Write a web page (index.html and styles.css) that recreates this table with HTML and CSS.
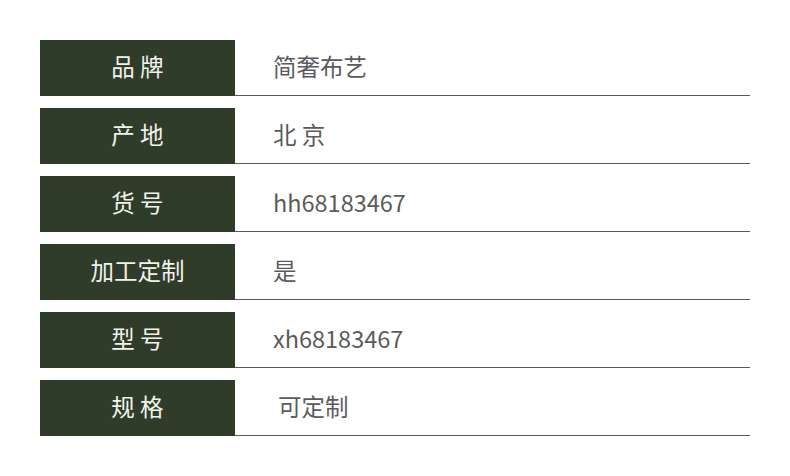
FILE: index.html
```html
<!DOCTYPE html>
<html lang="zh">
<head>
<meta charset="utf-8">
<link rel="stylesheet" href="styles.css">
</head>
<body>
<div class="table">
  <div class="row"><div class="label">品 牌</div><div class="value">简奢布艺</div></div>
  <div class="row"><div class="label">产 地</div><div class="value">北 京</div></div>
  <div class="row"><div class="label">货 号</div><div class="value">hh68183467</div></div>
  <div class="row"><div class="label">加工定制</div><div class="value">是</div></div>
  <div class="row"><div class="label">型 号</div><div class="value">xh68183467</div></div>
  <div class="row"><div class="label">规 格</div><div class="value indent">可定制</div></div>
</div>
</body>
</html>
```
FILE: styles.css
```css
html, body {
  margin: 0;
  padding: 0;
  background: #ffffff;
}
body {
  font-family: "Noto Sans CJK SC", "Noto Sans", sans-serif;
}
.table {
  padding: 40px 40px 0 40px;
  width: 710px;
  display: flex;
  flex-direction: column;
  gap: 12px;
}
.row {
  display: flex;
  height: 56px;
}
.label {
  width: 195px;
  flex: none;
  box-sizing: border-box;
  padding-bottom: 4px;
  background: #2f3c2a;
  color: #f2f2ec;
  font-size: 23.5px;
  font-weight: 400;
  display: flex;
  align-items: center;
  justify-content: center;
  white-space: pre;
}
.value {
  flex: 1;
  height: 56px;
  box-sizing: border-box;
  padding-bottom: 4px;
  border-bottom: 1px solid #5a5a5a;
  color: #5b5b5b;
  font-size: 23.5px;
  font-weight: 400;
  display: flex;
  align-items: center;
  padding-left: 38px;
  white-space: pre;
}
.value.indent {
  padding-left: 43px;
}
```
